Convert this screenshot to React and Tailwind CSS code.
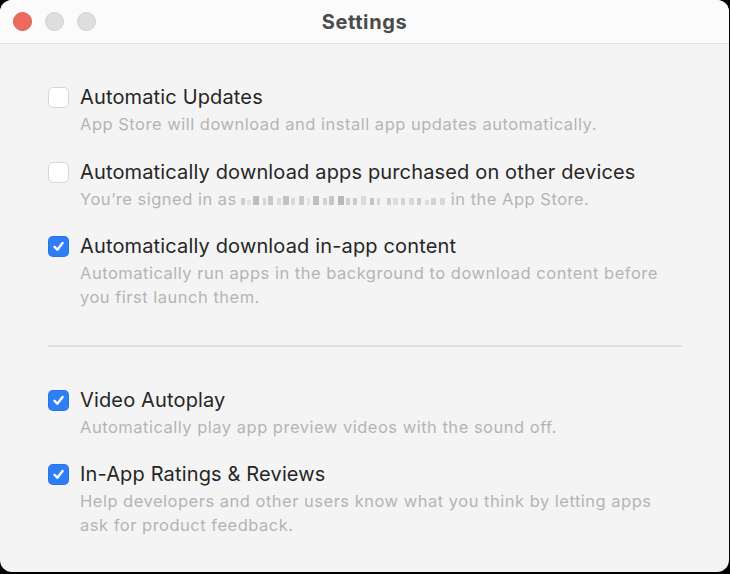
import React from "react";

function Check({ checked }) {
  if (checked) {
    return (
      <div className="w-[21px] h-[21px] rounded-[5px] bg-[#2d7ef7] flex items-center justify-center shrink-0 shadow-[inset_0_0_0_0.5px_rgba(0,0,0,0.15)]">
        <svg width="13" height="13" viewBox="0 0 13 13" fill="none">
          <path d="M2.5 6.8 L5.3 9.8 L10.6 3" stroke="white" strokeWidth="2.4" strokeLinecap="round" strokeLinejoin="round" />
        </svg>
      </div>
    );
  }
  return <div className="w-[21px] h-[21px] rounded-[5px] bg-white border border-[#d6d6d6] shrink-0" />;
}

function Blur() {
  const blocks = [
    [0, 4, 7, "#cfcfcf"], [6, 4, 5, "#e0e0e0"], [12, 6, 9, "#bdbdbd"], [22, 3, 7, "#d4d4d4"], [27, 5, 9, "#c8c8c8"],
    [36, 4, 7, "#dcdcdc"], [42, 6, 9, "#c2c2c2"], [50, 4, 7, "#d8d8d8"], [58, 5, 9, "#cacaca"], [66, 3, 7, "#e2e2e2"],
    [72, 6, 9, "#bfbfbf"], [82, 4, 7, "#d2d2d2"], [88, 5, 9, "#c6c6c6"], [97, 6, 9, "#b8b8b8"], [105, 4, 7, "#d0d0d0"],
    [112, 4, 7, "#cbcbcb"], [120, 5, 9, "#dadada"], [129, 4, 7, "#c4c4c4"], [136, 3, 7, "#d6d6d6"], [146, 4, 7, "#d0d0d0"],
    [152, 5, 7, "#dcdcdc"], [160, 4, 7, "#d4d4d4"], [168, 5, 7, "#d8d8d8"], [176, 4, 7, "#cecece"], [184, 4, 5, "#dddddd"],
    [190, 5, 7, "#d3d3d3"], [199, 5, 7, "#d8d8d8"],
  ];
  return (
    <span className="relative inline-block w-[206px] h-[14px] align-middle mx-[4px]">
      {blocks.map(([l, w, h, c], i) => (
        <span key={i} className="absolute" style={{ left: l, width: w, top: 12 - h, height: h, background: c }} />
      ))}
    </span>
  );
}

function Item({ checked, title, children }) {
  return (
    <div className="flex gap-[11px]">
      <div className="pt-[2px]"><Check checked={checked} /></div>
      <div className="flex flex-col">
        <div className="text-[20px] leading-[24px] text-[#262626] tracking-[0.15px]">{title}</div>
        <div className="text-[16.5px] leading-[24px] text-[#b4b4b4] mt-[3px] tracking-[0.5px]">{children}</div>
      </div>
    </div>
  );
}

export default function App() {
  return (
    <div className="w-[730px] h-[574px] bg-black" style={{ fontFamily: "Inter, 'Liberation Sans', sans-serif" }}>
      <div className="w-[729px] h-[572px] rounded-[12px] bg-[#f4f4f4] overflow-hidden flex flex-col">
        <div className="h-[44px] bg-[#fbfbfb] border-b border-[#e0e0e0] flex items-center relative shrink-0">
          <div className="flex gap-[13px] pl-[13px]">
            <div className="w-[19px] h-[19px] rounded-full bg-[#ee6a5e] border border-[#d85a4f]" />
            <div className="w-[19px] h-[19px] rounded-full bg-[#dedede] border border-[#d0d0d0]" />
            <div className="w-[19px] h-[19px] rounded-full bg-[#dedede] border border-[#d0d0d0]" />
          </div>
          <div className="absolute inset-0 flex items-center justify-center text-[20px] font-bold tracking-[0.6px] text-[#4a4a4a] pointer-events-none">Settings</div>
        </div>
        <div className="pl-[48px] pr-[47px] pt-[41px] flex flex-col">
          <div className="flex flex-col gap-[23.5px]">
            <Item checked={false} title="Automatic Updates">
              App Store will download and install app updates automatically.
            </Item>
            <Item checked={false} title="Automatically download apps purchased on other devices">
              You’re signed in as<Blur />in the App Store.
            </Item>
            <Item checked={true} title="Automatically download in-app content">
              Automatically run apps in the background to download content before you first launch them.
            </Item>
          </div>
          <div className="h-[2px] bg-[#e1e1e1] mt-[36px] mb-[41px]" />
          <div className="flex flex-col gap-[23px]">
            <Item checked={true} title="Video Autoplay">
              Automatically play app preview videos with the sound off.
            </Item>
            <Item checked={true} title="In-App Ratings & Reviews">
              Help developers and other users know what you think by letting apps ask for product feedback.
            </Item>
          </div>
        </div>
      </div>
    </div>
  );
}
